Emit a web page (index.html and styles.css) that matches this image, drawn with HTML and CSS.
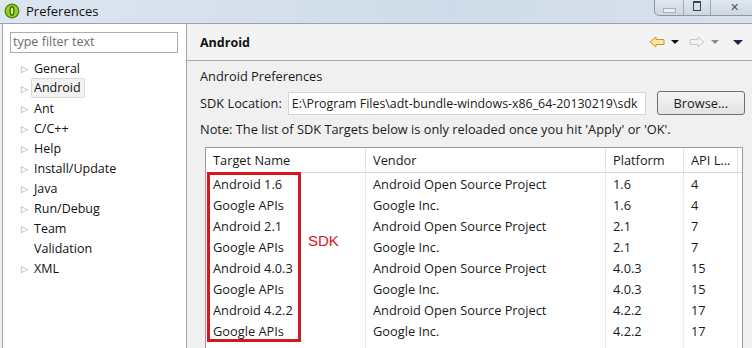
FILE: index.html
```html
<!DOCTYPE html>
<html lang="en">
<head>
    <meta charset="UTF-8">
    <title>Preferences</title>
    <link rel="stylesheet" href="styles.css">
</head>
<body>
    <div class="titlebar">
        <svg class="app-icon" width="16" height="16" viewBox="0 0 16 16">
            <circle cx="8" cy="8" r="7.5" fill="#5a8a12"/>
            <circle cx="8" cy="8" r="6" fill="#9ad12c"/>
            <ellipse cx="8" cy="8" rx="2.6" ry="5" fill="#3f6a06"/>
            <ellipse cx="8" cy="8" rx="1.2" ry="3.6" fill="#d9f08a"/>
        </svg>
        <span class="title">Preferences</span>
        <div class="win-buttons">
            <div class="win-btn min"><span class="min-bar"></span></div>
            <div class="win-btn max"><span class="max-box"></span></div>
            <div class="win-btn close">✕</div>
        </div>
    </div>
    <div class="main">
        <div class="left-panel">
            <div class="filter">type filter text</div>
            <ul class="tree">
                <li><span class="arrow">▷</span>General</li>
                <li><span class="arrow">▷</span><span class="selected">Android</span></li>
                <li><span class="arrow">▷</span>Ant</li>
                <li><span class="arrow">▷</span>C/C++</li>
                <li><span class="arrow">▷</span>Help</li>
                <li><span class="arrow">▷</span>Install/Update</li>
                <li><span class="arrow">▷</span>Java</li>
                <li><span class="arrow">▷</span>Run/Debug</li>
                <li><span class="arrow">▷</span>Team</li>
                <li><span class="arrow"></span>Validation</li>
                <li><span class="arrow">▷</span>XML</li>
            </ul>
        </div>
        <div class="right-panel">
            <div class="page-header">
                <span class="page-title">Android</span>
                <div class="nav">
                    <svg width="16" height="12" viewBox="0 0 16 12">
                        <path d="M1 6 L7 1 L7 3.5 L15 3.5 L15 8.5 L7 8.5 L7 11 Z" fill="#fde7a0" stroke="#c99a2a" stroke-width="1"/>
                    </svg>
                    <span class="drop dark"></span>
                    <svg width="16" height="12" viewBox="0 0 16 12">
                        <path d="M15 6 L9 1 L9 3.5 L1 3.5 L1 8.5 L9 8.5 L9 11 Z" fill="#f2f2f2" stroke="#c8c8c8" stroke-width="1"/>
                    </svg>
                    <span class="drop grey"></span>
                    <span class="drop navy"></span>
                </div>
            </div>
            <div class="content">
                <div class="label">Android Preferences</div>
                <div class="sdk-row">
                    <span>SDK Location:</span>
                    <div class="path-input">E:\Program Files\adt-bundle-windows-x86_64-20130219\sdk</div>
                    <div class="browse-btn">Browse...</div>
                </div>
                <div class="note">Note: The list of SDK Targets below is only reloaded once you hit 'Apply' or 'OK'.</div>
                <div class="table-wrap">
                    <table class="targets">
                        <thead>
                            <tr>
                                <th class="c-name">Target Name</th>
                                <th class="c-vendor">Vendor</th>
                                <th class="c-plat">Platform</th>
                                <th class="c-api">API L...</th>
                                <th class="c-rest"></th>
                            </tr>
                        </thead>
                        <tbody>
                            <tr><td>Android 1.6</td><td>Android Open Source Project</td><td>1.6</td><td>4</td><td></td></tr>
                            <tr><td>Google APIs</td><td>Google Inc.</td><td>1.6</td><td>4</td><td></td></tr>
                            <tr><td>Android 2.1</td><td>Android Open Source Project</td><td>2.1</td><td>7</td><td></td></tr>
                            <tr><td>Google APIs</td><td>Google Inc.</td><td>2.1</td><td>7</td><td></td></tr>
                            <tr><td>Android 4.0.3</td><td>Android Open Source Project</td><td>4.0.3</td><td>15</td><td></td></tr>
                            <tr><td>Google APIs</td><td>Google Inc.</td><td>4.0.3</td><td>15</td><td></td></tr>
                            <tr><td>Android 4.2.2</td><td>Android Open Source Project</td><td>4.2.2</td><td>17</td><td></td></tr>
                            <tr><td>Google APIs</td><td>Google Inc.</td><td>4.2.2</td><td>17</td><td></td></tr>
                            <tr><td></td><td></td><td></td><td></td><td></td></tr>
                        </tbody>
                    </table>
                    <div class="highlight"></div>
                    <div class="sdk-note">SDK</div>
                </div>
            </div>
        </div>
    </div>
</body>
</html>
```

FILE: styles.css
```css
body {
    margin: 0;
    width: 752px;
    height: 348px;
    overflow: hidden;
    font-family: "Open Sans", "Noto Sans", sans-serif;
    font-size: 12.8px;
    color: #1a1a1a;
    background-color: #f0f0f0;
    display: flex;
    flex-direction: column;
}
.titlebar {
    height: 23px;
    flex-shrink: 0;
    display: flex;
    align-items: center;
    background: linear-gradient(to right, #dce6f1, #cfdbe8 60%, #d8e2ed);
    border-bottom: 1px solid #9aa3ad;
}
.app-icon {
    margin: 0 6px 2px 4px;
}
.title {
    font-size: 13px;
    color: #111;
    margin-bottom: 2px;
}
.win-buttons {
    margin-left: auto;
    align-self: flex-start;
    display: flex;
    height: 15px;
    border: 1px solid #8d97a3;
    border-top: none;
    border-radius: 0 0 5px 5px;
    margin-right: -6px;
    background: linear-gradient(#dfe6ee, #cdd7e2);
}
.win-btn {
    display: flex;
    align-items: center;
    justify-content: center;
    color: #4a5563;
}
.win-btn.min {
    width: 28px;
    border-right: 1px solid #a0a9b4;
}
.min-bar {
    width: 11px;
    height: 3px;
    border: 1px solid #a8b0ba;
    background: #e8ecf0;
    margin-top: 5px;
}
.win-btn.max {
    width: 26px;
    border-right: 1px solid #a0a9b4;
}
.max-box {
    width: 6px;
    height: 7px;
    border: 1px solid #3a4654;
    border-top-width: 2px;
    margin-top: -3px;
}
.win-btn.close {
    width: 46px;
    font-size: 11px;
    line-height: 12px;
    align-items: flex-start;
    padding-top: 1px;
}
.main {
    flex: 1;
    display: flex;
    min-height: 0;
}
.left-panel {
    width: 185px;
    margin-left: 2px;
    flex-shrink: 0;
    background-color: #fff;
    border-left: 1px solid #a7a7a7;
    border-right: 1px solid #a7a7a7;
    padding-top: 8px;
    box-sizing: border-box;
}
.filter {
    margin-left: 7px;
    width: 164px;
    height: 19px;
    border: 1px solid #abadb3;
    color: #6d6d6d;
    font-size: 12.5px;
    line-height: 18px;
    padding-left: 2px;
}
.tree {
    list-style: none;
    margin: 5px 0 0;
    padding: 0;
}
.tree li {
    height: 20px;
    display: flex;
    align-items: center;
    font-size: 12.5px;
    color: #111;
}
.arrow {
    width: 12px;
    margin-left: 18px;
    color: #9a9a9a;
    font-size: 9px;
    margin-right: 1px;
}
.selected {
    margin-left: -3px;
    padding: 0 3px 1px 2px;
    border: 1px solid #dadada;
    border-radius: 2px;
    background-color: #f2f2f2;
    line-height: 17px;
}
.right-panel {
    flex: 1;
    display: flex;
    flex-direction: column;
    min-width: 0;
}
.page-header {
    height: 36px;
    flex-shrink: 0;
    display: flex;
    align-items: center;
    padding-left: 13px;
    border-bottom: 1px solid #a9a9a9;
    background-color: #f3f3f3;
}
.page-title {
    font-weight: bold;
    font-size: 12.5px;
    color: #111;
}
.nav {
    margin-left: auto;
    display: flex;
    align-items: center;
    gap: 6px;
    margin-right: 9px;
}
.drop {
    width: 0;
    height: 0;
    border-left: 4px solid transparent;
    border-right: 4px solid transparent;
    border-top: 4px solid #111;
    margin-right: 4px;
}
.drop.grey {
    border-top-color: #8a8a8a;
    margin-right: 8px;
}
.drop.navy {
    border-left-width: 5px;
    border-right-width: 5px;
    border-top: 5px solid #24244e;
    margin-right: 0;
}
.content {
    flex: 1;
    padding: 7px 0 0 13px;
    display: flex;
    flex-direction: column;
    min-height: 0;
}
.label {
    height: 16px;
    line-height: 16px;
}
.sdk-row {
    display: flex;
    align-items: center;
    margin-top: 7px;
    height: 24px;
}
.path-input {
    margin-left: 6px;
    width: 358px;
    height: 23px;
    line-height: 21px;
    font-size: 12.4px;
    background-color: #fff;
    border: 1px solid #d6d6d6;
    padding-left: 3px;
    box-sizing: border-box;
    white-space: nowrap;
    overflow: hidden;
}
.browse-btn {
    margin-left: 11px;
    width: 88px;
    height: 24px;
    box-sizing: border-box;
    border: 1px solid #707070;
    border-radius: 3px;
    background: linear-gradient(#f4f4f4, #e3e3e3);
    display: flex;
    align-items: center;
    justify-content: center;
}
.note {
    margin-top: 6px;
    height: 16px;
    line-height: 16px;
    white-space: nowrap;
}
.table-wrap {
    position: relative;
    margin: 10px 0 0 5px;
    width: 536px;
    flex: 1;
    background-color: #fff;
    border: 1px solid #9b9b9b;
    border-bottom: none;
    overflow: hidden;
}
.targets {
    border-collapse: collapse;
    table-layout: fixed;
    width: 100%;
}
.targets th {
    height: 24px;
    font-weight: normal;
    text-align: left;
    padding: 0 0 0 7px;
    border-right: 1px solid #e3e3e3;
    border-bottom: 1px solid #d5d5d5;
    background-color: #fff;
}
.targets td {
    height: 21px;
    padding: 0 0 0 7px;
    border-right: 1px solid #ececec;
    white-space: nowrap;
    overflow: hidden;
}
.c-name { width: 152px; }
.c-vendor { width: 232px; }
.c-plat { width: 70px; }
.c-api { width: 46px; }
.targets th.c-rest,
.targets td:last-child {
    border-right: none;
}
.highlight {
    position: absolute;
    left: 1px;
    top: 24px;
    width: 94px;
    height: 170px;
    box-sizing: border-box;
    border: 3px solid #d9161e;
}
.sdk-note {
    position: absolute;
    left: 102px;
    top: 84px;
    color: #d9161e;
    font-family: "Liberation Sans", sans-serif;
    font-size: 15px;
}
```
